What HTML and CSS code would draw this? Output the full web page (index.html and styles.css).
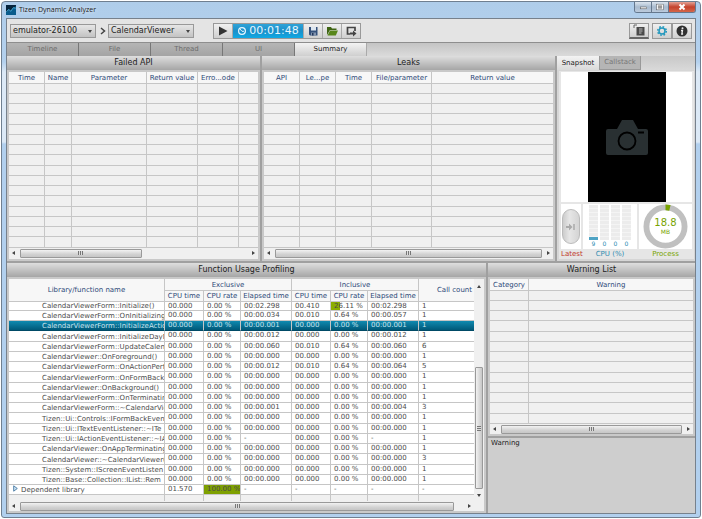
FILE: index.html
```html
<!DOCTYPE html>
<html lang="en">
<head>
<meta charset="utf-8">
<title>Tizen Dynamic Analyzer</title>
<link rel="stylesheet" href="styles.css">
</head>
<body>
<div class="window">
  <header class="titlebar">
    <svg class="app-icon" viewBox="0 0 30 30"><rect width="30" height="30" fill="#06243c"/><path d="M0 22l8-8 6 4 8-10 8-4v26H0z" fill="#0a5c8c"/><path d="M1 20l8-7 5 6 8-11 7 2" fill="none" stroke="#4db4e0" stroke-width="2.5"/></svg>
    <span class="app-title">Tizen Dynamic Analyzer</span>
    <div class="win-buttons">
      <button class="wb" aria-label="Minimize"><svg viewBox="0 0 18 10"><rect x="6" y="5" width="7" height="2" fill="#fff" stroke="#555" stroke-width=".6"/></svg></button>
      <button class="wb" aria-label="Maximize"><svg viewBox="0 0 18 10"><rect x="6" y="2.500" width="6" height="5" fill="#999" stroke="#fff" stroke-width="1.200"/><rect x="5.300" y="1.800" width="7.400" height="6.400" fill="none" stroke="#555" stroke-width=".5"/></svg></button>
      <button class="wb close" aria-label="Close"><svg viewBox="0 0 26 10"><path d="M10.500 2.500l5 5M15.500 2.500l-5 5" stroke="#fff" stroke-width="2"/></svg></button>
    </div>
  </header>

  <main class="frame">
    <div class="toolbar">
      <div class="combo"><select aria-label="Device"><option>emulator-26100</option></select></div>
      <svg class="chevron" viewBox="0 0 6 8"><path d="M1 1l3.500 3L1 7" fill="none" stroke="#444" stroke-width="1.500"/></svg>
      <div class="combo"><select aria-label="Application"><option>CalendarViewer</option></select></div>
      <div class="controls">
        <button class="tool" aria-label="Start"><svg viewBox="0 0 18 14"><path d="M5 2.500l8.500 4.500L5 11.500z" fill="#333"/></svg></button>
        <div class="timer"><svg viewBox="0 0 10 10"><circle cx="5" cy="5" r="3.400" fill="none" stroke="#e6f7ff" stroke-width="1.200"/><path d="M2.500 2.500L5 5.300h2" fill="none" stroke="#e6f7ff"/></svg><span>00:01:48</span></div>
        <button class="tool" aria-label="Save"><svg viewBox="0 0 18 14"><path d="M5 3h8.500v8.500H6L5 10.500z" fill="#33507a"/><rect x="7" y="3" width="5" height="3.500" fill="#dde6f0"/><rect x="7" y="8.500" width="5" height="3" fill="#8193ad"/><rect x="8" y="9" width="1.500" height="2.500" fill="#22375a"/></svg></button>
        <button class="tool" aria-label="Open"><svg viewBox="0 0 18 14"><path d="M4 11V3h4l1 1.500h4.500V6H7z" fill="#3f6413"/><path d="M4.500 11.500L7 6.500h8l-2.200 5z" fill="#57861a"/></svg></button>
        <button class="tool" aria-label="Export"><svg viewBox="0 0 18 14"><path d="M8 10H5.500V3.500h7.500V7" fill="none" stroke="#444" stroke-width="1.700"/><path d="M8 8.500h3V6.500l3.500 3-3.500 3V10.500H8z" fill="#444"/></svg></button>
      </div>
      <div class="right-tools">
        <button class="tool log" aria-label="Log view"><svg viewBox="0 0 18 14"><path d="M4 1h3M4 1v3" stroke="#666" stroke-width="1"/><rect x="6.500" y="3" width="8" height="8.500" fill="#4a4a4a"/><path d="M9 5h3.500M9 7h3.500M9 9h2.500" stroke="#bbb"/></svg></button>
        <button class="tool" aria-label="Settings"><svg viewBox="0 0 18 14"><circle cx="9" cy="7" r="3" fill="none" stroke="#2398bd" stroke-width="1.500"/><circle cx="9" cy="7" r="4.300" fill="none" stroke="#2398bd" stroke-width="1.500" stroke-dasharray="1.700 1.677"/></svg></button>
        <button class="tool" aria-label="About"><svg viewBox="0 0 18 14"><circle cx="9" cy="7" r="5.500" fill="#303030"/><circle cx="9.500" cy="4.200" r="1" fill="#eee"/><path d="M8 6.500h1.500L8.800 10h1.300" fill="none" stroke="#eee" stroke-width="1.300"/></svg></button>
      </div>
    </div>

    <nav class="tabs">
      <button>Timeline</button><button>File</button><button>Thread</button><button>UI</button><button class="active">Summary</button>
    </nav>

    <div class="row top">
      <section class="panel">
        <h2>Failed API</h2>
        <div class="body">
          <table class="grid">
            <colgroup><col class="w36"><col class="w27"><col class="w75"><col class="w51"><col class="w41"><col></colgroup>
            <thead><tr><th>Time<th>Name<th>Parameter<th>Return value<th>Erro...ode<th></tr></thead>
            <tbody>
            <tr><td><td><td><td><td><td><tr><td><td><td><td><td><td><tr><td><td><td><td><td><td><tr><td><td><td><td><td><td>
            <tr><td><td><td><td><td><td><tr><td><td><td><td><td><td><tr><td><td><td><td><td><td><tr><td><td><td><td><td><td>
            <tr><td><td><td><td><td><td><tr><td><td><td><td><td><td><tr><td><td><td><td><td><td><tr><td><td><td><td><td><td>
            <tr><td><td><td><td><td><td><tr><td><td><td><td><td><td><tr><td><td><td><td><td><td><tr><td><td><td><td><td><td>
            </tbody>
          </table>
          <div class="hscroll"><i class="left"></i><div class="thumb failed"></div><i class="right"></i></div>
        </div>
      </section>
      <section class="panel">
        <h2>Leaks</h2>
        <div class="body">
          <table class="grid">
            <colgroup><col class="w36"><col class="w36"><col class="w36"><col class="w60"><col></colgroup>
            <thead><tr><th>API<th>Le...pe<th>Time<th>File/parameter<th>Return value</tr></thead>
            <tbody>
            <tr><td><td><td><td><td><tr><td><td><td><td><td><tr><td><td><td><td><td><tr><td><td><td><td><td>
            <tr><td><td><td><td><td><tr><td><td><td><td><td><tr><td><td><td><td><td><tr><td><td><td><td><td>
            <tr><td><td><td><td><td><tr><td><td><td><td><td><tr><td><td><td><td><td><tr><td><td><td><td><td>
            <tr><td><td><td><td><td><tr><td><td><td><td><td><tr><td><td><td><td><td><tr><td><td><td><td><td>
            </tbody>
          </table>
          <div class="hscroll"><i class="left"></i><div class="thumb"></div><i class="right"></i></div>
        </div>
      </section>
      <section class="side">
        <nav class="side-tabs"><button class="active">Snapshot</button><button>Callstack</button></nav>
        <div class="side-body">
          <div class="shot"><div class="screen"><svg viewBox="0 0 42 35"><path d="M2 9h9l5-9h11l5 9h8q2 0 2 2v22q0 2-2 2H2q-2 0-2-2V11q0-2 2-2z" fill="#293032"/><circle cx="21" cy="21" r="8.500" fill="none" stroke="#000" stroke-width="1.800"/><path d="M32 12.500h6" stroke="#000" stroke-width="2"/></svg></div></div>
          <div class="gauges">
            <div class="gauge latest"><div class="box"><button class="pill" aria-label="Latest"><svg viewBox="0 0 10 8"><path d="M0 3h3V.500L6.500 4 3 7.500V5H0z" fill="#aaa"/><path d="M8 1v6" stroke="#aaa" stroke-width="1.500"/></svg></button></div><span>Latest</span></div>
            <div class="gauge cpu"><div class="box"><div class="bars">
              <div><i class="bar load"></i><b>9</b></div><div><i class="bar"></i><b>0</b></div><div><i class="bar"></i><b>0</b></div><div><i class="bar"></i><b>0</b></div>
            </div></div><span>CPU (%)</span></div>
            <div class="gauge process"><div class="box"><div class="ring"><svg viewBox="0 0 46 46"><circle cx="23" cy="23" r="19.500" fill="none" stroke="#c0c0c0" stroke-width="6"/><path d="M23 3.500A19.500 19.500 0 0 1 27.500 4" fill="none" stroke="#78a300" stroke-width="6"/></svg><div class="reading"><strong>18.8</strong><small>MB</small></div></div></div><span>Process</span></div>
          </div>
        </div>
      </section>
    </div>

    <div class="row bottom">
      <section class="panel profiling">
        <h2>Function Usage Profiling</h2>
        <div class="body split">
          <div class="main-col">
            <table class="grid profile">
              <colgroup><col><col class="w39"><col class="w37"><col class="w51"><col class="w39"><col class="w37"><col class="w51"><col class="w55"></colgroup>
              <thead>
                <tr><th rowspan="2">Library/function name<th colspan="3">Exclusive<th colspan="3">Inclusive<th rowspan="2" class="count">Call count</tr>
                <tr><th>CPU time<th>CPU rate<th>Elapsed time<th>CPU time<th>CPU rate<th>Elapsed time</tr>
              </thead>
              <tbody>
                <tr><td>CalendarViewerForm::Initialize()<td>00.000<td>0.00 %<td>00:02.298<td>00.410<td class="part">26.11 %<td>00:02.298<td>1
                <tr><td>CalendarViewerForm::OnInitializing<td>00.000<td>0.00 %<td>00:00.034<td>00.010<td>0.64 %<td>00:00.057<td>1
                <tr class="selected"><td>CalendarViewerForm::InitializeActio<td>00.000<td>0.00 %<td>00:00.001<td>00.000<td>0.00 %<td>00:00.001<td>1
                <tr><td>CalendarViewerForm::InitializeDayM<td>00.000<td>0.00 %<td>00:00.012<td>00.000<td>0.00 %<td>00:00.012<td>1
                <tr><td>CalendarViewerForm::UpdateCalen<td>00.000<td>0.00 %<td>00:00.060<td>00.010<td>0.64 %<td>00:00.060<td>6
                <tr><td>CalendarViewer::OnForeground()<td>00.000<td>0.00 %<td>00:00.000<td>00.000<td>0.00 %<td>00:00.000<td>1
                <tr><td>CalendarViewerForm::OnActionPerf<td>00.000<td>0.00 %<td>00:00.012<td>00.010<td>0.64 %<td>00:00.064<td>5
                <tr><td>CalendarViewerForm::OnFormBackI<td>00.000<td>0.00 %<td>00:00.000<td>00.000<td>0.00 %<td>00:00.000<td>1
                <tr><td>CalendarViewer::OnBackground()<td>00.000<td>0.00 %<td>00:00.000<td>00.000<td>0.00 %<td>00:00.000<td>1
                <tr><td>CalendarViewerForm::OnTerminatin<td>00.000<td>0.00 %<td>00:00.000<td>00.000<td>0.00 %<td>00:00.000<td>1
                <tr><td>CalendarViewerForm::~CalendarVie<td>00.000<td>0.00 %<td>00:00.001<td>00.000<td>0.00 %<td>00:00.004<td>3
                <tr><td>Tizen::Ui::Controls::IFormBackEven<td>00.000<td>0.00 %<td>00:00.000<td>00.000<td>0.00 %<td>00:00.000<td>1
                <tr><td>Tizen::Ui::ITextEventListener::~ITe<td>00.000<td>0.00 %<td>00:00.000<td>00.000<td>0.00 %<td>00:00.000<td>1
                <tr><td>Tizen::Ui::IActionEventListener::~IA<td>00.000<td>0.00 %<td>-<td>00.000<td>0.00 %<td>-<td>1
                <tr><td>CalendarViewer::OnAppTerminating<td>00.000<td>0.00 %<td>00:00.000<td>00.000<td>0.00 %<td>00:00.000<td>1
                <tr><td>CalendarViewer::~CalendarViewer(<td>00.000<td>0.00 %<td>00:00.000<td>00.000<td>0.00 %<td>00:00.000<td>3
                <tr><td>Tizen::System::IScreenEventListen<td>00.000<td>0.00 %<td>00:00.000<td>00.000<td>0.00 %<td>00:00.000<td>1
                <tr><td>Tizen::Base::Collection::IList::Rem<td>00.000<td>0.00 %<td>00:00.000<td>00.000<td>0.00 %<td>00:00.000<td>1
                <tr class="root"><td><svg viewBox="0 0 5 7"><path d="M.700.800L4.300 3.500.700 6.200z" fill="#cfe6f7" stroke="#4477a0" stroke-width=".9"/></svg>Dependent library<td>01.570<td class="full">100.00 %<td>-<td>-<td>-<td>-<td>-
                <tr class="filler"><td><td><td><td><td><td><td><td>
              </tbody>
            </table>
            <div class="hscroll"><i class="left"></i><div class="thumb profile-thumb"></div><i class="right"></i></div>
          </div>
          <div class="vscroll"><i class="up"></i><div class="vthumb"></div><i class="down"></i></div>
        </div>
      </section>
      <div class="warn-col">
        <section class="panel">
          <h2>Warning List</h2>
          <div class="body">
            <table class="grid">
              <colgroup><col class="w39"><col></colgroup>
              <thead><tr><th>Category<th>Warning</tr></thead>
              <tbody>
              <tr><td><td><tr><td><td><tr><td><td><tr><td><td><tr><td><td><tr><td><td><tr><td><td>
              <tr><td><td><tr><td><td><tr><td><td><tr><td><td><tr><td><td><tr><td><td>
              </tbody>
            </table>
            <div class="hscroll"><i class="left"></i><div class="thumb"></div><i class="right"></i></div>
          </div>
        </section>
        <section class="detail">Warning</section>
      </div>
    </div>
  </main>
</div>
</body>
</html>
```
FILE: styles.css
```css
* { box-sizing: border-box; }

body {
  margin: 0;
  background: #fff;
  font: 7px/9px "DejaVu Sans", Verdana, sans-serif;
  color: #333;
}

button, select { font: inherit; color: inherit; margin: 0; padding: 0; border: 0; background: none; border-radius: 0; }
h2 { margin: 0; }
svg { display: block; }

.window {
  margin: 1px 1px 0 1px;
  padding: 0 4px 3px;
  border: 1px solid #6f7f90;
  border-radius: 4px 4px 3px 3px;
  background: linear-gradient(#afcdea, #b4d1ee 60px, #dce9f6 70px, #dce9f6 140px, #b2d0ee 142px);
}

/* Title bar */
.titlebar { display: flex; align-items: center; height: 16px; }
.app-icon { width: 10px; height: 10px; }
.app-title { flex: 1; margin-left: 3px; font: 7px/12px "Open Sans", "Noto Sans", sans-serif; color: #222; text-shadow: 0 0 4px #fff; }
.win-buttons { display: flex; align-self: flex-start; border: 1px solid #65788e; border-top: 0; border-radius: 0 0 3px 3px; overflow: hidden; }
.wb { width: 17px; height: 10px; border-right: 1px solid #65788e; background: linear-gradient(#dbe5ef, #a9bbce 50%, #bccbdd); }
.wb.close { width: 26px; border-right: 0; background: linear-gradient(#e3a295, #c4422c 50%, #d4664a); }
.wb svg { width: 100%; height: 10px; }

.frame { border: 1px solid #77818c; background: #a0a0a0; }

/* Toolbar */
.toolbar { display: flex; align-items: center; height: 23px; padding: 0 3px; background: #e4e4e4; }
.combo { position: relative; width: 86px; height: 14px; border: 1px solid #999; background: linear-gradient(#e6e6e6, #c3c3c3); }
.combo::after { content: ""; position: absolute; right: 3px; top: 5px; border: 2px solid transparent; border-top: 3px solid #444; border-bottom: 0; pointer-events: none; }
.combo select { appearance: none; width: 100%; height: 12px; padding-left: 2px; font-size: 8px; line-height: 12px; color: #222; outline: 0; }
.chevron { width: 6px; height: 8px; margin: 0 2px 0 4px; }
.controls { display: flex; margin-left: 19px; height: 16px; border: 1px solid #999; background: #aaa; gap: 1px; }
.tool { width: 18px; height: 14px; background: linear-gradient(#f0f0f0, #cfcfcf); }
.tool svg { width: 18px; height: 14px; }
.timer { display: flex; align-items: center; justify-content: center; gap: 2px; width: 70px; background: linear-gradient(#2fa3d8, #1b8fc9 50%, #0fa9e4); color: #e6f7ff; font-size: 11px; line-height: 14px; }
.timer svg { width: 10px; height: 10px; }
.right-tools { display: flex; margin-left: auto; }
.right-tools .tool { width: 20px; height: 16px; border: 1px solid #999; }
.right-tools .log { margin-right: 3px; border-bottom: 2px solid #666; }

/* Page tabs */
.tabs { display: flex; height: 14px; border-top: 1px solid #8e8e8e; background: linear-gradient(#c4c4c4, #dadada); }
.tabs button { width: 72px; line-height: 13px; color: #6d6d6d; border-right: 1px solid #777; background: linear-gradient(#b5b5b5, #a4a4a4); }
.tabs .active { color: #222; border-color: #aaa; background: linear-gradient(#f3f3f3, #cfcfcf); }

/* Panels */
.row { display: grid; gap: 2px; }
.top { grid-template-columns: 253fr 293fr 138px; }
.bottom { grid-template-columns: 479fr 207fr; margin-top: 2px; }
.panel { display: flex; flex-direction: column; background: #c9c9c9; min-width: 0; }
.panel h2 { height: 14px; font-size: 8px; line-height: 14px; font-weight: 400; text-align: center; color: #222; background: linear-gradient(#dedede, #a6a6a6); }
.body { flex: 1; margin: 2px; background: #f0f0f0; min-width: 0; }

/* Tables */
.grid { width: 100%; table-layout: fixed; border-collapse: separate; border-spacing: 0; }
.grid th, .grid td { height: 10px; padding: 0; border-right: 1px solid #c6c6c6; border-bottom: 1px solid #c6c6c6; line-height: 8px; white-space: nowrap; overflow: hidden; }
.grid th:last-child, .grid td:last-child { border-right: 0; }
.grid th { height: 12px; font-weight: 400; color: #2c4878; background: #f7f7f7; }
.grid tbody tr:nth-child(4n) td { height: 11px; }
.w27 { width: 27px; }
.w36 { width: 36px; }
.w37 { width: 37px; }
.w39 { width: 39px; }
.w41 { width: 41px; }
.w51 { width: 51px; }
.w55 { width: 55px; }
.w60 { width: 60px; }
.w75 { width: 75px; }

.profile thead tr:last-child th { height: 11px; }
.profile thead tr:last-child th:last-child { border-right: 1px solid #c6c6c6; }
.profile .count { padding-left: 16px; }
.profile tbody td { padding-left: 3px; color: #4b4b4b; background: #fff; vertical-align: top; }
.profile tbody td:first-child { padding-left: 33px; vertical-align: bottom; }
.profile tbody tr:first-child td { height: 9px; }
.profile tbody .root td:first-child { padding-left: 4px; }
.root svg { display: inline-block; width: 5px; height: 7px; margin-right: 3px; }
.profile .selected td { color: #c9e4ee; background: linear-gradient(#0f8ab0, #005878); border-bottom-color: #004a66; }
.profile tbody .part { background: linear-gradient(90deg, #8cae00 9px, #fff 9px); }
.profile tbody .full { background: #7ea000; }
.profile tbody tr.filler:nth-child(n) td { height: 6px; line-height: 5px; background: #f0f0f0; border-bottom: 0; }

.split { display: flex; }
.main-col { flex: 1; min-width: 0; }

/* Scroll bars */
.hscroll { display: flex; align-items: center; height: 10px; padding: 0 3px; background: #f0f0f0; }
.hscroll i, .vscroll i { flex: none; width: 0; height: 0; border: 2px solid transparent; }
.hscroll .left { border-left: 0; border-right: 3px solid #444; }
.hscroll .right { margin-left: auto; border-right: 0; border-left: 3px solid #444; }
.thumb { display: flex; align-items: center; justify-content: center; flex: 1; height: 9px; margin: 0 5px; border: 1px solid #999; border-radius: 1px; background: linear-gradient(#f2f2f2, #d2d2d2 60%, #c6c6c6); }
.thumb::after { content: ""; width: 5px; height: 4px; background: repeating-linear-gradient(90deg, #777 0 1px, #ddd 1px 2px); }
.thumb.failed { flex: 0 0 50%; }
.thumb.profile-thumb { margin-right: 14px; }
.vscroll { display: flex; flex-direction: column; align-items: center; width: 10px; padding: 6px 0 14px; background: #f0f0f0; }
.vscroll .up { border-top: 0; border-bottom: 3px solid #444; }
.vscroll .down { border-bottom: 0; border-top: 3px solid #444; }
.vthumb { display: flex; align-items: center; justify-content: center; width: 8px; height: 122px; margin: auto 0 5px; border: 1px solid #999; border-radius: 1px; background: linear-gradient(90deg, #f2f2f2, #c6c6c6); }
.vthumb::after { content: ""; width: 4px; height: 5px; background: repeating-linear-gradient(#777 0 1px, #ddd 1px 2px); }

/* Snapshot side panel */
.side { display: flex; flex-direction: column; background: #d6d6d6; }
.side-tabs { display: flex; height: 14px; background: linear-gradient(#c8c8c8, #d9d9d9); }
.side-tabs button { width: 42px; color: #777; border: 1px solid #999; border-top: 0; background: #b5b5b5; }
.side-tabs .active { color: #222; border: 0; background: linear-gradient(#f3f3f3, #dadada); }
.side-body { flex: 1; display: flex; flex-direction: column; margin: 1px 1px 2px 2px; padding: 1px 2px 0; background: #e6e6e6; }
.shot { height: 130px; background: #fff; }
.screen { display: flex; align-items: center; justify-content: center; width: 78px; height: 130px; margin: 0 auto; background: #000; }
.screen svg { width: 42px; height: 35px; }
.gauges { display: flex; gap: 2px; margin-top: 2px; }
.gauge { text-align: center; white-space: nowrap; }
.gauge > span { display: block; line-height: 10px; }
.box { display: flex; align-items: center; justify-content: center; height: 45px; background: #fff; }
.latest { width: 20px; color: #c0392b; }
.cpu { width: 54px; color: #2b8ab0; }
.process { flex: 1; color: #78a300; }
.pill { display: flex; align-items: center; justify-content: center; width: 18px; height: 35px; border: 1px solid #bbb; border-radius: 9px; background: linear-gradient(90deg, #ccc, #e6e6e6 40%, #d4d4d4); }
.pill svg { width: 10px; height: 8px; }
.bars { display: flex; gap: 2px; }
.bar { display: block; width: 9px; height: 35px; background: repeating-linear-gradient(#ececec 0 3px, #f4f4f4 3px 4px); }
.load { border-bottom: 3px solid #4ea3c4; }
.bars b { display: block; font-size: 6px; line-height: 8px; font-weight: 400; }
.ring { display: grid; width: 45px; height: 45px; }
.ring > * { grid-area: 1 / 1; place-self: center; }
.ring svg { width: 45px; height: 45px; }
.reading { display: flex; flex-direction: column; align-items: center; }
.reading strong { font-size: 10px; line-height: 11px; font-weight: 400; }
.reading small { font-size: 6px; line-height: 8px; }

/* Warnings */
.warn-col { display: flex; flex-direction: column; gap: 2px; min-width: 0; }
.detail { flex: 1; padding: 1px 3px; background: #cecece; color: #222; }
```
